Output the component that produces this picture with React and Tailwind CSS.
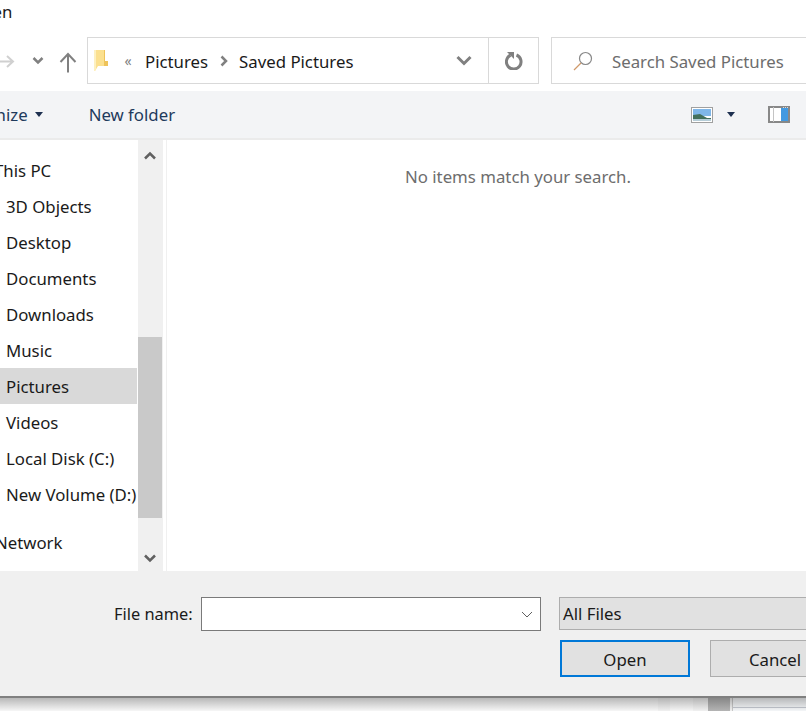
const navItems = ['3D Objects', 'Desktop', 'Documents', 'Downloads', 'Music', 'Pictures', 'Videos', 'Local Disk (C:)', 'New Volume (D:)'];

function FolderIcon() {
  return (
    <svg width="14" height="21" viewBox="0 0 14 21">
      <path d="M0 0h10v16H4l-3 5H0z" fill="#fbe08f" />
      <path d="M10 0h1v11h3v5H10z" fill="#eec35a" />
      <path d="M0 0h2v19l-1 2H0z" fill="#fdf0c0" />
    </svg>
  );
}

function ViewIcon() {
  return (
    <svg width="22" height="16" viewBox="0 0 22 16">
      <rect x="0.500" y="0.500" width="21" height="15" fill="#fff" stroke="#a0a0a0" />
      <rect x="2" y="2" width="18" height="7" fill="#7fb6e8" />
      <path d="M2 8l7-1 7 4h4v3H2z" fill="#44705c" />
      <rect x="2" y="12" width="18" height="2" fill="#b6cdd8" />
    </svg>
  );
}

function PaneIcon() {
  return (
    <svg width="22" height="17" viewBox="0 0 22 17">
      <rect x="1" y="1" width="20" height="15" fill="#fff" stroke="#888" strokeWidth="2" />
      <rect x="5" y="1" width="1" height="15" fill="#c4c4c4" />
      <rect x="13" y="2" width="7" height="13" fill="#4299e1" />
      <rect x="15" y="1" width="1" height="1" fill="#ddd" />
      <rect x="17" y="1" width="1" height="1" fill="#ddd" />
      <rect x="19" y="1" width="1" height="1" fill="#ddd" />
    </svg>
  );
}

export default function App() {
  return (
    <div className="w-[806px] h-[711px] overflow-hidden bg-white flex flex-col text-[16.8px] text-[#1a1a1a]" style={{ fontFamily: '"Noto Sans", sans-serif' }}>
      {/* title */}
      <div className="h-[37px] shrink-0 leading-[24px] -ml-[31px]">Open</div>

      {/* nav row */}
      <div className="h-[47px] shrink-0 flex items-center">
        <svg className="w-[87px] h-[47px] shrink-0" viewBox="0 0 87 47" fill="none">
          <path d="M0 24.500h12M7 19l6 5.500L7 30" stroke="#d0d0d0" strokeWidth="2" />
          <path d="M33.500 21l4.500 4.500 4.500-4.500" stroke="#808080" strokeWidth="2.500" />
          <path d="M68 35.500V17M60.500 25l7.500-8 7.500 8" stroke="#808080" strokeWidth="2" />
        </svg>
        <div className="w-[452px] h-[47px] border border-[#d9d9d9] flex items-center shrink-0">
          <div className="ml-[6px] w-[14px] h-[21px] shrink-0"><FolderIcon /></div>
          <span className="ml-[14px] w-[12px] text-center text-[14px] text-[#808080]">«</span>
          <span className="ml-[11px] mt-[2px]">Pictures</span>
          <svg className="ml-[12px] mr-[11px]" width="8" height="12" viewBox="0 0 8 12" fill="none">
            <path d="M1.500 1.500L6 6l-4.500 4.500" stroke="#808080" strokeWidth="2.500" />
          </svg>
          <span className="mt-[2px]">Saved Pictures</span>
          <div className="flex-1" />
          <svg className="mr-[16px]" width="16" height="11" viewBox="0 0 16 11" fill="none">
            <path d="M1.500 2l6.500 6.500L14.500 2" stroke="#808080" strokeWidth="3" />
          </svg>
          <div className="w-[50px] h-full border-l border-[#d9d9d9] flex items-center justify-center">
            <svg width="18" height="18" viewBox="0 0 18 18" fill="none">
              <path d="M11.500 3a7.300 7.300 0 1 1-6 .2" stroke="#808080" strokeWidth="3" />
              <path d="M2 0h7v7z" fill="#808080" />
            </svg>
          </div>
        </div>
        <div className="ml-[12px] w-[300px] h-[47px] border border-[#d9d9d9] flex items-center shrink-0 text-[#6d6d6d]">
          <svg className="ml-[21px]" width="20" height="20" viewBox="0 0 20 20" fill="none">
            <circle cx="12.500" cy="7.500" r="6" stroke="#888" strokeWidth="1.200" />
            <path d="M8 12l-7 7" stroke="#d09a6a" strokeWidth="1.200" />
          </svg>
          <span className="ml-[19px] mt-[2px] whitespace-nowrap">Search Saved Pictures</span>
        </div>
      </div>

      <div className="h-[7px] shrink-0" />

      {/* command bar */}
      <div className="h-[49px] shrink-0 bg-[#f3f4f6] border-b-2 border-[#ebebeb] flex items-center text-[#1e3a5c]">
        <span className="-ml-[44px]">Organize</span>
        <svg className="ml-[7px]" width="8" height="5" viewBox="0 0 8 5"><path d="M0 0h8L4 5z" fill="#1e3050" /></svg>
        <span className="ml-[46px]">New folder</span>
        <div className="flex-1" />
        <ViewIcon />
        <svg className="ml-[14px]" width="8" height="5" viewBox="0 0 8 5"><path d="M0 0h8L4 5z" fill="#1e3050" /></svg>
        <div className="ml-[33px] mr-[16px]"><PaneIcon /></div>
      </div>

      {/* body */}
      <div className="h-[431px] shrink-0 flex">
        <div className="w-[138px] shrink-0 pt-[12px] overflow-hidden">
          <div className="-ml-[6px] h-[36px] leading-[38px] whitespace-nowrap">This PC</div>
          {navItems.map(item => (
            <div key={item} className={`h-[36px] leading-[38px] pl-[6px] whitespace-nowrap w-[137px] ${item === 'Pictures' ? 'bg-[#d9d9d9]' : ''}`}>{item}</div>
          ))}
          <div className="mt-[13px] -ml-[5px] h-[36px] leading-[36px]">Network</div>
        </div>
        <div className="w-[25px] shrink-0 bg-[#f0f0f0] flex flex-col">
          <div className="h-[197px] pt-[11px] pl-[6px]">
            <svg width="12" height="9" viewBox="0 0 12 9" fill="none">
              <path d="M1 7.500l5-5 5 5" stroke="#606060" strokeWidth="2.500" />
            </svg>
          </div>
          <div className="w-[24px] h-[181px] bg-[#c9c9c9]" />
          <div className="pt-[36px] pl-[6px]">
            <svg width="12" height="9" viewBox="0 0 12 9" fill="none">
              <path d="M1 1.500l5 5 5-5" stroke="#606060" strokeWidth="2.500" />
            </svg>
          </div>
        </div>
        <div className="w-[3px] shrink-0" />
        <div className="w-[1px] shrink-0 bg-[#f0f0f0]" />
        <div className="flex-1 pt-[24px] pl-[238px] text-[#6d6d6d] whitespace-nowrap">No items match your search.</div>
      </div>

      {/* footer */}
      <div className="h-[127px] shrink-0 bg-[#f0f0f0] border-b-2 border-[#808080] pt-[26px]">
        <div className="flex items-start h-[43px]">
          <span className="ml-[114px] w-[87px] h-[34px] leading-[34px] text-[16.4px] whitespace-nowrap shrink-0">File name:</span>
          <div className="w-[340px] h-[34px] bg-white border border-[#7a7a7a] flex items-center justify-end pr-[7px] shrink-0">
            <svg width="12" height="7" viewBox="0 0 12 7" fill="none"><path d="M1 1l5 5 5-5" stroke="#606060" /></svg>
          </div>
          <div className="ml-[18px] w-[300px] h-[33px] bg-[#e1e1e1] border border-[#adadad] leading-[31px] pl-[3px] shrink-0">All Files</div>
        </div>
        <div className="flex">
          <button className="ml-[560px] w-[130px] h-[37px] pt-[2px] bg-[#e1e1e1] border-2 border-[#0078d7] shrink-0">Open</button>
          <button className="ml-[20px] w-[130px] h-[37px] pt-[2px] bg-[#e1e1e1] border border-[#adadad] shrink-0">Cancel</button>
        </div>
      </div>

      {/* window behind the dialog, darkened by its shadow */}
      <div className="relative flex-1 flex bg-white">
        <div className="w-[658px] shrink-0 bg-[#f6f6f6]" />
        <div className="w-[12px] shrink-0 bg-[#f0f0f0]" />
        <div className="w-[23px] shrink-0 bg-[#f6f6f6]" />
        <div className="w-[15px] shrink-0 bg-[#f0f0f0]" />
        <div className="w-[22px] shrink-0 bg-[#b4b4b4]" />
        <div className="w-[2px] shrink-0 bg-[#f0f0f0]" />
        <div className="flex-1 border-l border-[#c8c8c8] bg-[#f4f6f8]">
          <div className="h-[10px] border-b border-[#c4c8d0]" />
        </div>
        <div className="absolute inset-0 bg-gradient-to-b from-[#00000040] to-[#00000000]" />
      </div>
    </div>
  );
}
